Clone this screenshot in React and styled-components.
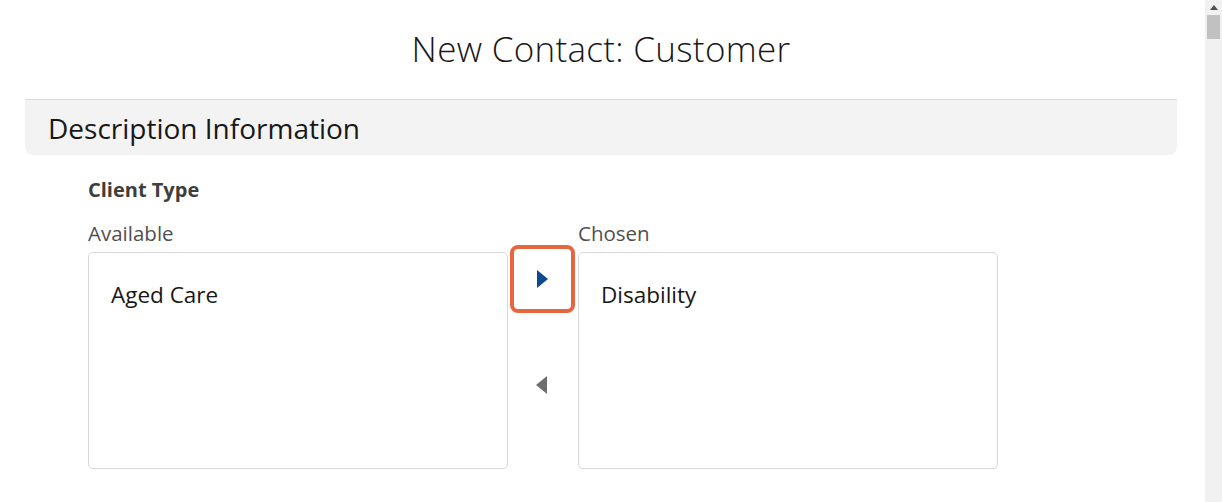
import styled, { createGlobalStyle } from "styled-components";

const GlobalStyle = createGlobalStyle`
    html, body {
        margin: 0;
        padding: 0;
        background: #ffffff;
        overflow: hidden;
    }
    body {
        font-family: "Open Sans", "Liberation Sans", sans-serif;
        color: #181818;
    }
`

const Page = styled.div`
    display: flex;
    height: 100vh;
    width: 100vw;
`

const Main = styled.div`
    flex: 1;
    padding: 0 28px 0 25px;
`

const Title = styled.h1`
    margin: 0;
    height: 99px;
    display: flex;
    align-items: center;
    justify-content: center;
    padding-bottom: 2px;
    box-sizing: border-box;
    font-size: 35px;
    letter-spacing: 0.3px;
    font-weight: 300;
    color: #181818;
`

const SectionHeader = styled.div`
    height: 56px;
    box-sizing: border-box;
    border-top: 1px solid #dddbda;
    background: #f3f3f3;
    border-radius: 0 0 8px 8px;
    display: flex;
    align-items: center;
    padding-left: 23px;
    font-size: 28px;
    color: #181818;
`

const FieldBody = styled.div`
    padding: 21px 0 0 63px;
`

const FieldLabel = styled.div`
    font-size: 20px;
    font-weight: 700;
    color: #3e3e3c;
    line-height: 28px;
`

const ListRow = styled.div`
    display: flex;
    margin-top: 16px;
`

const ListColumn = styled.div`
    display: flex;
    flex-direction: column;
    width: 420px;
`

const ListLabel = styled.div`
    font-size: 20.5px;
    color: #514f4d;
    line-height: 26px;
    margin-bottom: 6px;
`

const ListBox = styled.div`
    height: 217px;
    box-sizing: border-box;
    border: 1px solid #d8d8d8;
    border-radius: 5px;
    padding: 27px 0 0 22px;
`

const ListOption = styled.div`
    font-size: 22.5px;
    color: #181818;
    line-height: 30px;
`

const ButtonColumn = styled.div`
    width: 70px;
    display: flex;
    flex-direction: column;
    align-items: center;
    padding-top: 25px;
    gap: 38px;
`

const MoveButton = styled.button`
    width: 65px;
    height: 68px;
    box-sizing: border-box;
    background: #ffffff;
    border: ${p => p.$focused ? "4px solid #e5663f" : "4px solid transparent"};
    border-radius: 8px;
    display: flex;
    align-items: center;
    justify-content: center;
    padding: 0;
    margin-left: -2px;
    cursor: pointer;
`

const Scrollbar = styled.div`
    width: 17px;
    background: #f1f1f1;
    display: flex;
    flex-direction: column;
    align-items: center;
`

const ScrollArrow = styled.div`
    height: 14px;
    display: flex;
    align-items: center;
    justify-content: center;
`

const ScrollThumb = styled.div`
    width: 13px;
    height: 24px;
    background: #c1c1c1;
    margin-top: 1px;
`

const Triangle = ({ dir, color }) => (
    <svg width="14" height="20" viewBox="0 0 14 20">
        {dir === "right"
            ? <path d="M2 1 L13 10 L2 19 Z" fill={color} />
            : <path d="M12 1 L1 10 L12 19 Z" fill={color} />}
    </svg>
)

const App = () => {
    return <>
        <GlobalStyle />
        <Page>
            <Main>
                <Title>New Contact: Customer</Title>
                <SectionHeader>Description Information</SectionHeader>
                <FieldBody>
                    <FieldLabel>Client Type</FieldLabel>
                    <ListRow>
                        <ListColumn>
                            <ListLabel>Available</ListLabel>
                            <ListBox>
                                <ListOption>Aged Care</ListOption>
                            </ListBox>
                        </ListColumn>
                        <ButtonColumn>
                            <MoveButton $focused title="Move to Chosen">
                                <Triangle dir="right" color="#0b4a8f" />
                            </MoveButton>
                            <MoveButton title="Move to Available">
                                <Triangle dir="left" color="#706e6b" />
                            </MoveButton>
                        </ButtonColumn>
                        <ListColumn>
                            <ListLabel>Chosen</ListLabel>
                            <ListBox>
                                <ListOption>Disability</ListOption>
                            </ListBox>
                        </ListColumn>
                    </ListRow>
                </FieldBody>
            </Main>
            <Scrollbar>
                <ScrollArrow>
                    <svg width="8" height="5" viewBox="0 0 8 5"><path d="M4 0 L8 5 L0 5 Z" fill="#505050" /></svg>
                </ScrollArrow>
                <ScrollThumb />
            </Scrollbar>
        </Page>
    </>
}

export default App
